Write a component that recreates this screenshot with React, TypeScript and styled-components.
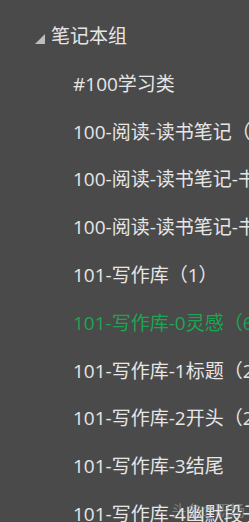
import React from 'react';
import styled, { createGlobalStyle } from 'styled-components';

const GlobalStyle = createGlobalStyle`
  html, body {
    margin: 0;
    padding: 0;
    background: #4a4a4a;
    overflow: hidden;
  }
  #root {
    height: 100vh;
  }
`;

const Panel = styled.div`
  position: relative;
  height: 522px;
  overflow: hidden;
  background: #4a4a4a;
  padding-top: 11px;
  box-sizing: border-box;
  font-family: 'Open Sans', 'Noto Sans CJK SC', sans-serif;
  font-size: 19px;
  color: #e6e6e6;
`;

const GroupHeader = styled.div`
  display: flex;
  align-items: center;
  height: 48px;
  padding-left: 35px;
  white-space: nowrap;
`;

const Caret = styled.span`
  width: 0;
  height: 0;
  border-left: 10px solid transparent;
  border-bottom: 10px solid #bdbdbd;
  margin-right: 6px;
  margin-top: 8px;
`;

const List = styled.ul`
  list-style: none;
  margin: 0;
  padding: 0;
`;

const Item = styled.li<{ $active?: boolean }>`
  display: flex;
  align-items: center;
  height: 47.8px;
  padding-left: 73px;
  white-space: nowrap;
  color: ${(p) => (p.$active ? '#1aa651' : '#e6e6e6')};
`;

const Watermark = styled.div`
  position: absolute;
  right: 4px;
  bottom: 2px;
  font-size: 15px;
  color: rgba(255, 255, 255, 0.3);
  white-space: nowrap;
`;

const notebooks = [
  { name: '#100学习类' },
  { name: '100-阅读-读书笔记（12）' },
  { name: '100-阅读-读书笔记-书单（3）' },
  { name: '100-阅读-读书笔记-书摘（5）' },
  { name: '101-写作库（1）' },
  { name: '101-写作库-0灵感（6）', active: true },
  { name: '101-写作库-1标题（2）' },
  { name: '101-写作库-2开头（2）' },
  { name: '101-写作库-3结尾' },
  { name: '101-写作库-4幽默段子' },
];

export default function App() {
  return (
    <>
      <GlobalStyle />
      <Panel>
        <GroupHeader>
          <Caret />
          笔记本组
        </GroupHeader>
        <List>
          {notebooks.map((nb, index) => (
            <Item key={index} $active={nb.active}>
              {nb.name}
            </Item>
          ))}
        </List>
        <Watermark>头条@职场</Watermark>
      </Panel>
    </>
  );
}
